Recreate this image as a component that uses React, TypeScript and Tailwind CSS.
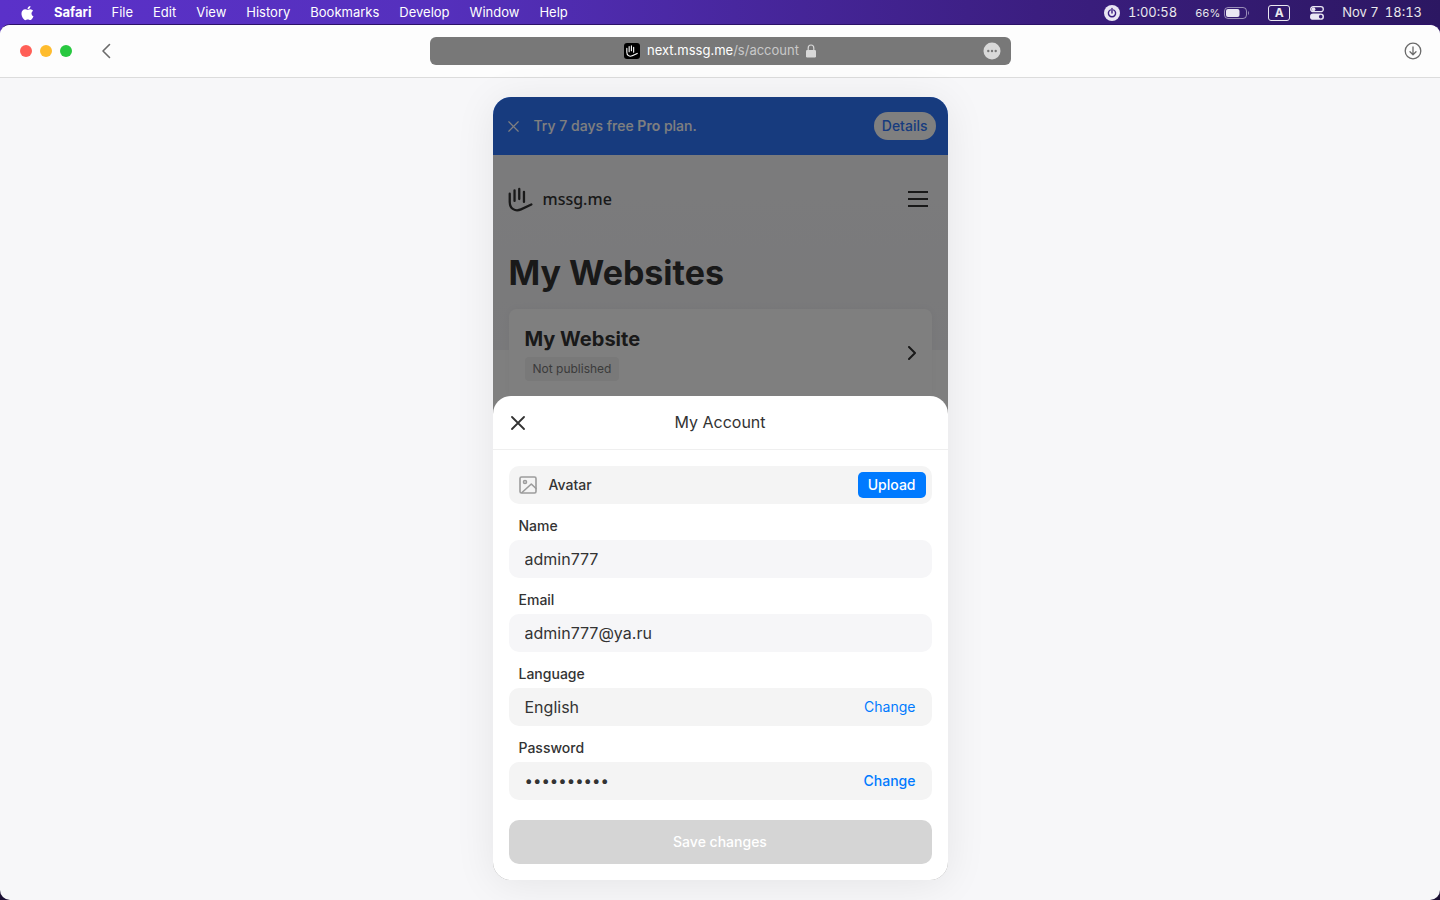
import type { ReactNode } from "react";

const menus = ["File", "Edit", "View", "History", "Bookmarks", "Develop", "Window", "Help"];

function HandIcon({ className }: { className: string }) {
  return (
    <svg viewBox="0 0 26 26" fill="none" stroke="currentColor" strokeWidth="2.400" strokeLinecap="round" strokeLinejoin="round" className={className} aria-hidden="true">
      <path d="M1.800 7V15.500C1.800 22.500 7.500 26 13.500 23.300L24.300 18.200" />
      <path d="M6.800 3.500V14.500M11.700 2V12.500M16.600 5V15.500" />
    </svg>
  );
}

function CrossIcon({ className, strokeWidth }: { className: string; strokeWidth: number }) {
  return (
    <svg viewBox="0 0 14 14" fill="none" stroke="currentColor" strokeWidth={strokeWidth} strokeLinecap="round" className={className} aria-hidden="true">
      <path d="M1 1L13 13M13 1L1 13" />
    </svg>
  );
}

function MenuBar() {
  return (
    <header className="flex h-6 items-center justify-between px-[18px] pt-0.5 text-[13px] text-white text-shadow-xs">
      <nav className="flex items-center gap-5">
        <button type="button" aria-label="Apple" className="w-4">
          <svg viewBox="0 0 24 24" fill="currentColor" className="h-5 w-[19px]" aria-hidden="true">
            <path d="M17.050 20.280c-.98.95-2.050.8-3.080.35-1.090-.46-2.090-.48-3.240 0-1.440.62-2.200.44-3.060-.35C2.790 15.250 3.510 7.590 9.050 7.310c1.350.07 2.290.74 3.080.8 1.180-.24 2.310-.93 3.570-.84 1.510.12 2.650.72 3.400 1.800-3.120 1.870-2.380 5.980.48 7.130-.57 1.500-1.310 2.990-2.540 4.090zM12.030 7.250c-.15-2.230 1.660-4.070 3.740-4.250.29 2.580-2.340 4.500-3.740 4.250z" />
          </svg>
        </button>
        <button type="button" className="font-bold">Safari</button>
        {menus.map((m) => (
          <button type="button" key={m}>{m}</button>
        ))}
      </nav>
      <div className="flex items-center gap-[18px] text-white/90 tabular-nums">
        <div className="flex items-center gap-2">
          <svg viewBox="0 0 16 16" className="size-4" aria-hidden="true">
            <circle cx="8" cy="8" r="8" fill="#e9e6f3" />
            <path d="M6.300 5A3.600 3.600 0 1 0 9.700 5M8 3.500V8" fill="none" stroke="#3a1c80" strokeWidth="1.400" strokeLinecap="round" />
          </svg>
          <span>1:00:58</span>
        </div>
        <div className="flex items-center gap-1">
          <span className="text-[11px]">66%</span>
          <svg viewBox="0 0 26 12" className="h-3 w-[26px]" aria-hidden="true">
            <rect x="0.500" y="0.500" width="22" height="11" rx="3.500" fill="none" stroke="#fff" strokeOpacity="0.500" />
            <rect x="2" y="2" width="13.500" height="8" rx="2" fill="#e9e6f3" />
            <path d="M24 4V8C25.300 7.500 25.300 4.500 24 4Z" fill="#fff" fillOpacity="0.500" />
          </svg>
        </div>
        <span className="flex h-4 w-[22px] items-center justify-center rounded-[3px] border border-white/90 text-xs font-bold">A</span>
        <svg viewBox="0 0 14 14" className="ml-0.5 size-3.5" aria-hidden="true">
          <rect x="0.700" y="0.700" width="12.600" height="5" rx="2.500" fill="none" stroke="#e9e6f3" strokeWidth="1.300" />
          <circle cx="3.500" cy="3.200" r="1.900" fill="#e9e6f3" />
          <rect x="0" y="7.500" width="14" height="6.300" rx="3.150" fill="#e9e6f3" />
          <circle cx="10.700" cy="10.650" r="1.800" fill="#331a73" />
        </svg>
        <div className="flex gap-1.5">
          <span>Nov 7</span>
          <span>18:13</span>
        </div>
      </div>
    </header>
  );
}

function Toolbar() {
  return (
    <div className="flex h-[53px] shrink-0 items-center justify-between border-b border-[#dcdcdc] bg-[#fdfdfd] px-5">
      <div className="flex flex-1 items-center gap-7">
        <div className="flex gap-2">
          <button type="button" aria-label="Close window" className="size-3 rounded-full bg-[#ff5f57]" />
          <button type="button" aria-label="Minimize window" className="size-3 rounded-full bg-[#febc2e]" />
          <button type="button" aria-label="Zoom window" className="size-3 rounded-full bg-[#28c840]" />
        </div>
        <button type="button" aria-label="Back" className="text-[#6b6b6b]">
          <svg viewBox="0 0 12 16" className="h-4 w-3" fill="none" stroke="currentColor" strokeWidth="1.600" strokeLinecap="round" strokeLinejoin="round" aria-hidden="true">
            <path d="M9.500 1.500L3 8L9.500 14.500" />
          </svg>
        </button>
      </div>
      <div className="flex h-7 w-[581px] items-center rounded-md bg-[#787878] px-2.5 text-[13px] text-white">
        <div className="w-6" />
        <div className="flex flex-1 items-center justify-center gap-[7px]">
          <span className="flex size-4 items-center justify-center rounded-[3px] bg-black">
            <HandIcon className="size-3" />
          </span>
          <span>
            next.mssg.me<span className="text-[#c9c9c9]">/s/account</span>
          </span>
          <svg viewBox="0 0 10 14" className="h-3.5 w-2.5 text-[#d8d8d8]" aria-hidden="true">
            <rect x="0" y="6" width="10" height="7.500" rx="1.200" fill="currentColor" />
            <path d="M2.200 6.500V4A2.800 3 0 0 1 7.800 4V6.500" fill="none" stroke="currentColor" strokeWidth="1.200" />
          </svg>
        </div>
        <button type="button" aria-label="Page options" className="flex w-6 justify-end">
          <svg viewBox="0 0 18 18" className="size-[18px]" aria-hidden="true">
            <circle cx="9" cy="9" r="8.500" fill="#d9d9d9" />
            <g fill="#787878">
              <circle cx="5.300" cy="9" r="1.200" />
              <circle cx="9" cy="9" r="1.200" />
              <circle cx="12.700" cy="9" r="1.200" />
            </g>
          </svg>
        </button>
      </div>
      <div className="flex flex-1 justify-end">
        <button type="button" aria-label="Downloads" className="text-[#6b6b6b]">
          <svg viewBox="0 0 18 18" className="-mr-0.5 size-[18px]" fill="none" stroke="currentColor" strokeWidth="1.300" strokeLinecap="round" strokeLinejoin="round" aria-hidden="true">
            <circle cx="9" cy="9" r="7.800" />
            <path d="M9 5V12.500M6 9.800L9 12.700L12 9.800" />
          </svg>
        </button>
      </div>
    </div>
  );
}

function Dashboard() {
  return (
    <div aria-hidden="true" className="absolute inset-0 overflow-hidden rounded-[18px] bg-white text-[#333]">
      <div className="bg-gradient-to-b from-[#f8f8fa] to-[#f3f3f6]">
        <div className="flex h-[58px] items-center bg-[#2f77fd] pr-3 pl-[15px] text-white">
          <button type="button" aria-label="Dismiss" className="mr-[15px]">
            <CrossIcon className="size-[11px]" strokeWidth={1.5} />
          </button>
          <p className="flex-1 text-sm font-medium">
            Try 7 days free <b className="font-semibold">Pro</b> plan.
          </p>
          <button type="button" className="h-7 rounded-full bg-white px-2 text-sm font-medium text-[#2f77fd]">Details</button>
        </div>
        <div className="flex h-[88px] items-center justify-between pr-5 pl-[15px]">
          <div className="flex items-center gap-2.5">
            <HandIcon className="size-[25px]" />
            <span className="font-['Noto_Sans',sans-serif] text-base font-medium">mssg.me</span>
          </div>
          <button type="button" aria-label="Menu">
            <svg viewBox="0 0 20 16" className="h-4 w-5" stroke="currentColor" strokeWidth="2" strokeLinecap="round" aria-hidden="true">
              <path d="M0.500 1H19.500M0.500 8H19.500M0.500 15H19.500" />
            </svg>
          </button>
        </div>
        <h1 className="px-4 pt-2 pb-[14px] text-[34px] leading-11 font-bold">My Websites</h1>
        <div className="h-[41px] px-4">
          <a href="#website" className="flex h-[88px] items-center justify-between rounded-t-lg bg-white px-4 shadow-[0_0_8px_rgba(0,0,0,0.04)]">
            <div>
              <h2 className="mb-1 text-xl leading-7 font-bold">My Website</h2>
              <span className="flex h-6 w-fit items-center rounded bg-[#f3f3f3] px-2 text-xs text-[#777]">Not published</span>
            </div>
            <svg viewBox="0 0 8 14" className="h-3.5 w-2" fill="none" stroke="currentColor" strokeWidth="2" strokeLinecap="round" strokeLinejoin="round" aria-hidden="true">
              <path d="M1 1L7 7L1 13" />
            </svg>
          </a>
        </div>
      </div>
      <div className="absolute inset-0 bg-black/50" />
    </div>
  );
}

function Field({ id, label, tone, children, ...input }: { id: string; label: string; tone: string; type: string; value: string; readOnly?: boolean; children?: ReactNode }) {
  return (
    <div>
      <label htmlFor={id} className="flex h-9 items-center px-2.5 pt-2 text-sm font-medium">{label}</label>
      <div className={`flex h-[38px] items-center rounded-[10px] px-4 ${tone}`}>
        <input id={id} type={input.type} defaultValue={input.value} readOnly={input.readOnly} autoComplete="off" className={`min-w-0 flex-1 bg-transparent outline-none ${input.type === "password" ? "text-[15px]" : "text-base"}`} />
        {children}
      </div>
    </div>
  );
}

function AccountSheet() {
  return (
    <section aria-label="My Account" className="relative w-full rounded-[18px] bg-white text-[#333]">
      <div className="grid h-[54px] grid-cols-[1fr_auto_1fr] items-center border-b border-[#efefef] px-[18px]">
        <button type="button" aria-label="Close" className="justify-self-start">
          <CrossIcon className="size-3.5" strokeWidth={1.8} />
        </button>
        <h2 className="pb-0.5 text-base">My Account</h2>
      </div>
      <form className="p-4">
        <div className="flex h-[38px] items-center rounded-[10px] bg-[#f4f4f4] pr-1.5 pl-2.5">
          <svg viewBox="0 0 18 18" className="mr-3 size-[18px] text-[#9c9c9c]" fill="none" stroke="currentColor" strokeWidth="1.600" strokeLinejoin="round" strokeLinecap="round" aria-hidden="true">
            <rect x="1" y="1" width="16" height="16" rx="1.500" />
            <circle cx="6" cy="6" r="1.500" />
            <path d="M3 16.500L12.300 8L17 12.500" />
          </svg>
          <span className="flex-1 text-sm font-medium">Avatar</span>
          <button type="button" className="h-[26px] rounded-[5px] bg-[#007aff] px-2.5 text-sm font-medium text-white">Upload</button>
        </div>
        <Field id="name" label="Name" type="text" value="admin777" tone="bg-[#f6f6f8]" />
        <Field id="email" label="Email" type="email" value="admin777@ya.ru" tone="bg-[#f6f6f8]" />
        <Field id="language" label="Language" type="text" value="English" tone="bg-[#f4f4f4]" readOnly>
          <button type="button" className="text-sm text-[#007aff]">Change</button>
        </Field>
        <Field id="password" label="Password" type="password" value="admin77777" tone="bg-[#f4f4f4]" readOnly>
          <button type="button" className="text-sm font-medium text-[#007aff]">Change</button>
        </Field>
        <button type="submit" disabled className="mt-5 h-11 w-full rounded-[10px] bg-[#d5d5d5] text-sm font-medium text-white">Save changes</button>
      </form>
    </section>
  );
}

export default function App() {
  return (
    <div className="flex min-h-screen flex-col bg-[#1b1033] bg-[linear-gradient(to_right,#5b31c9,#5530bd_30%,#3b1e80_72%,#2c1762)] bg-size-[100%_40px] bg-no-repeat font-[Inter,sans-serif]">
      <MenuBar />
      <div className="flex flex-1 flex-col overflow-hidden rounded-[10px] border-t border-[#2c1268] bg-[#f7f7f9]">
        <Toolbar />
        <main className="flex flex-1 justify-center px-4 pt-[19px] pb-5">
          <div className="relative flex w-full max-w-[455px] flex-col justify-end rounded-[18px] pt-24 shadow-[0_4px_40px_rgba(0,0,0,0.08)]">
            <Dashboard />
            <AccountSheet />
          </div>
        </main>
      </div>
    </div>
  );
}
